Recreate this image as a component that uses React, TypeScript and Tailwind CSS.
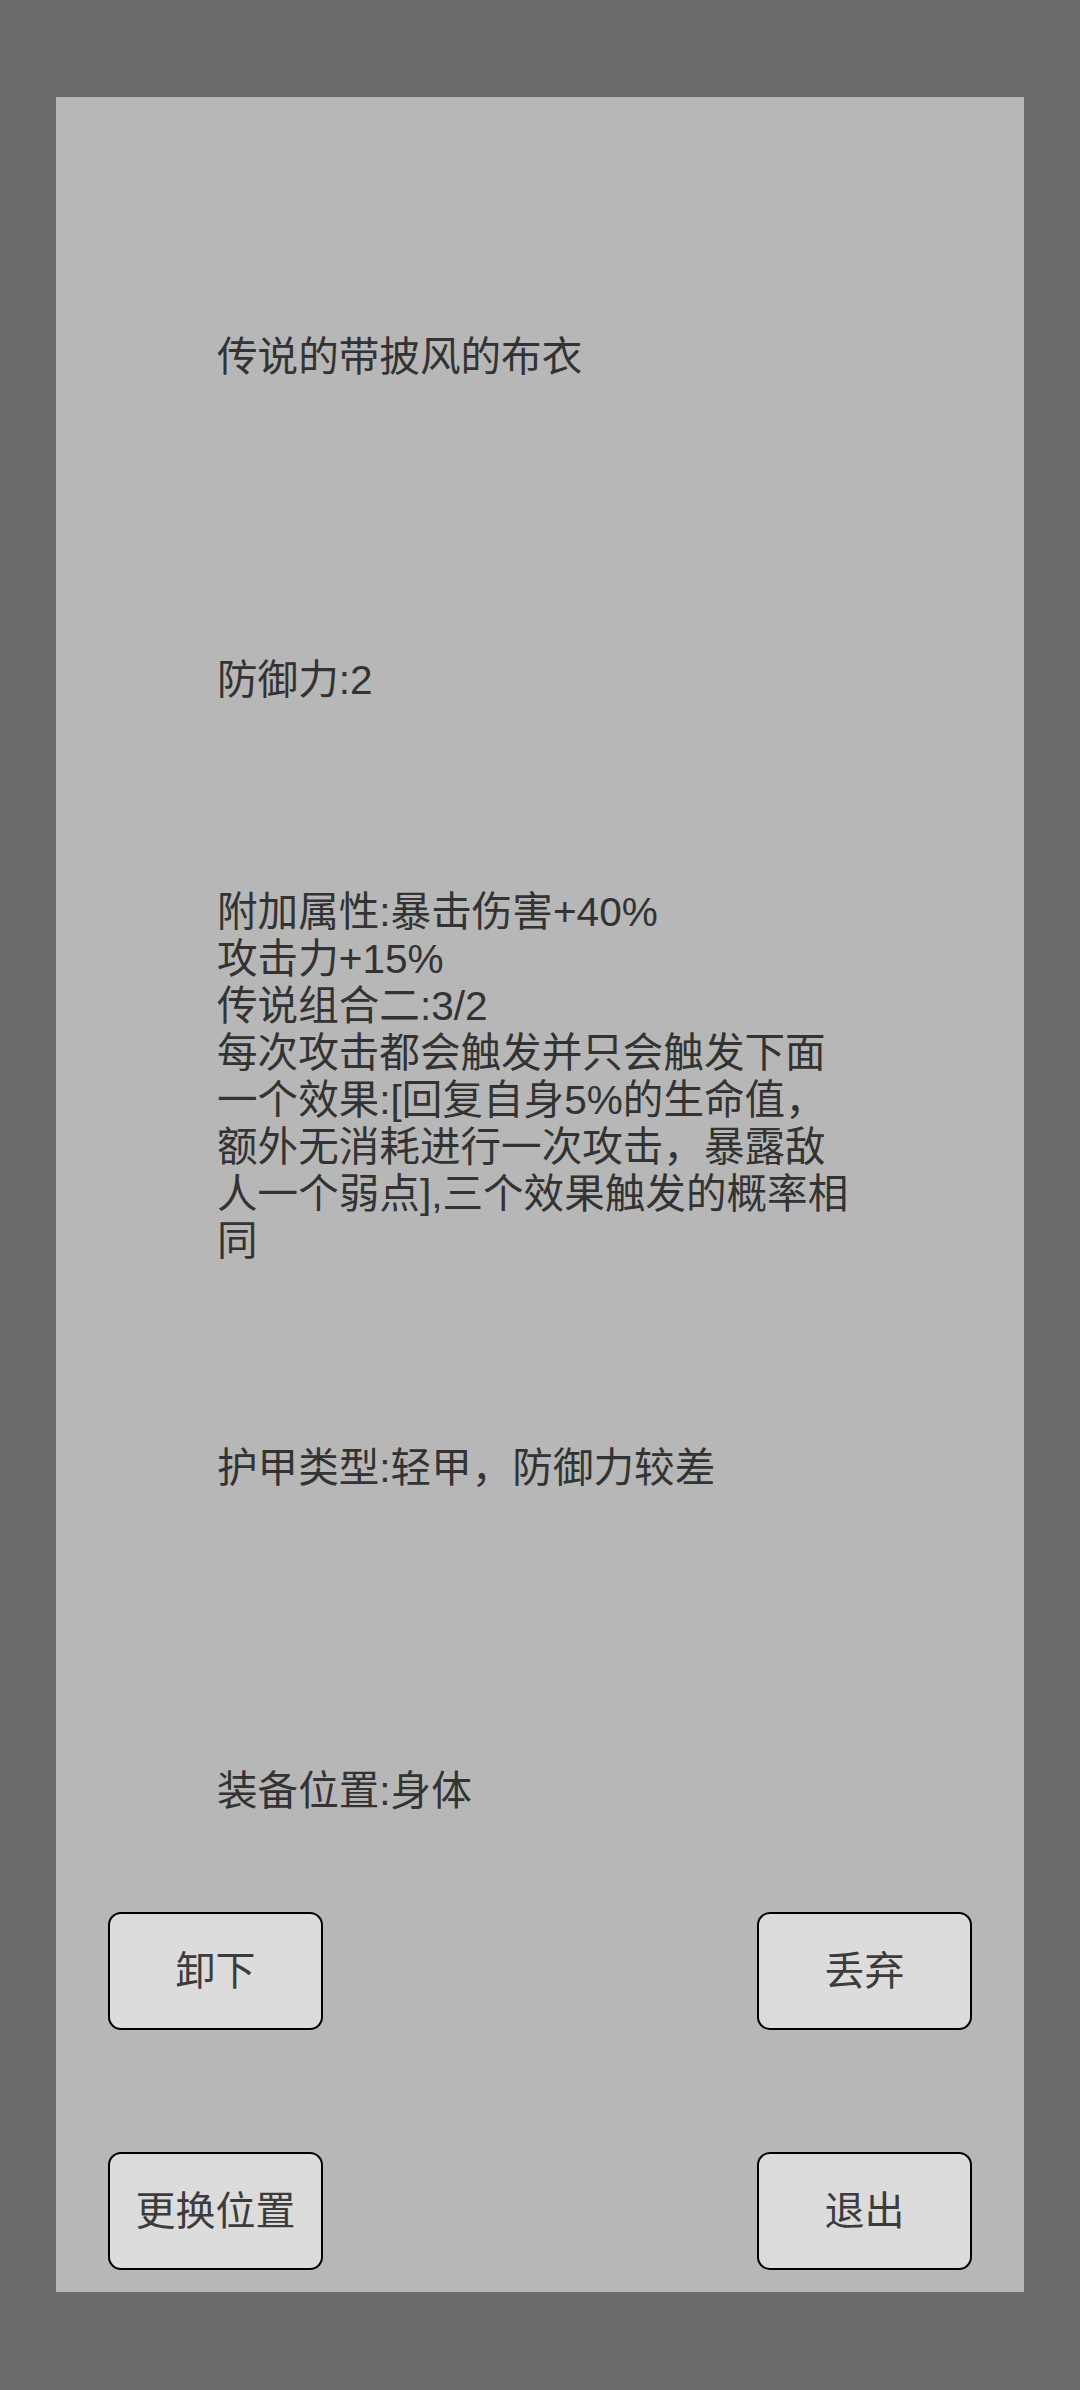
import React from 'react';

const font = { fontFamily: '"Liberation Sans", "Noto Sans CJK SC", sans-serif' };

const effectLines = [
  '附加属性:暴击伤害+40%',
  '攻击力+15%',
  '传说组合二:3/2',
  '每次攻击都会触发并只会触发下面',
  '一个效果:[回复自身5%的生命值，',
  '额外无消耗进行一次攻击，暴露敌',
  '人一个弱点],三个效果触发的概率相',
  '同',
];

function ActionButton({ label }: { label: string }) {
  return (
    <button className="w-[215px] h-[118px] rounded-[13px] border-2 border-black bg-[#dcdcdc] text-[40px] leading-none text-[#3c3c3c] flex items-center justify-center">
      {label}
    </button>
  );
}

export default function App() {
  return (
    <div className="w-full h-[2390px] bg-[#6b6b6b] pt-[97px] px-[56px]" style={font}>
      <div className="w-[968px] h-[2195px] bg-[#b7b7b7] flex flex-col">
        {/* Item info */}
        <div className="pl-[161px] pt-[237px] text-[40.6px] leading-[47px] text-[#333333] flex flex-col">
          <p>传说的带披风的布衣</p>
          <p className="mt-[276px]">防御力:2</p>
          <div className="mt-[185px]">
            {effectLines.map((line) => (
              <p key={line}>{line}</p>
            ))}
          </div>
          <p className="mt-[180px]">护甲类型:轻甲，防御力较差</p>
          <p className="mt-[276px]">装备位置:身体</p>
        </div>

        {/* Actions */}
        <div className="mt-auto px-[52px] pb-[22px] flex flex-col gap-[122px]">
          <div className="flex justify-between">
            <ActionButton label="卸下" />
            <ActionButton label="丢弃" />
          </div>
          <div className="flex justify-between">
            <ActionButton label="更换位置" />
            <ActionButton label="退出" />
          </div>
        </div>
      </div>
    </div>
  );
}
